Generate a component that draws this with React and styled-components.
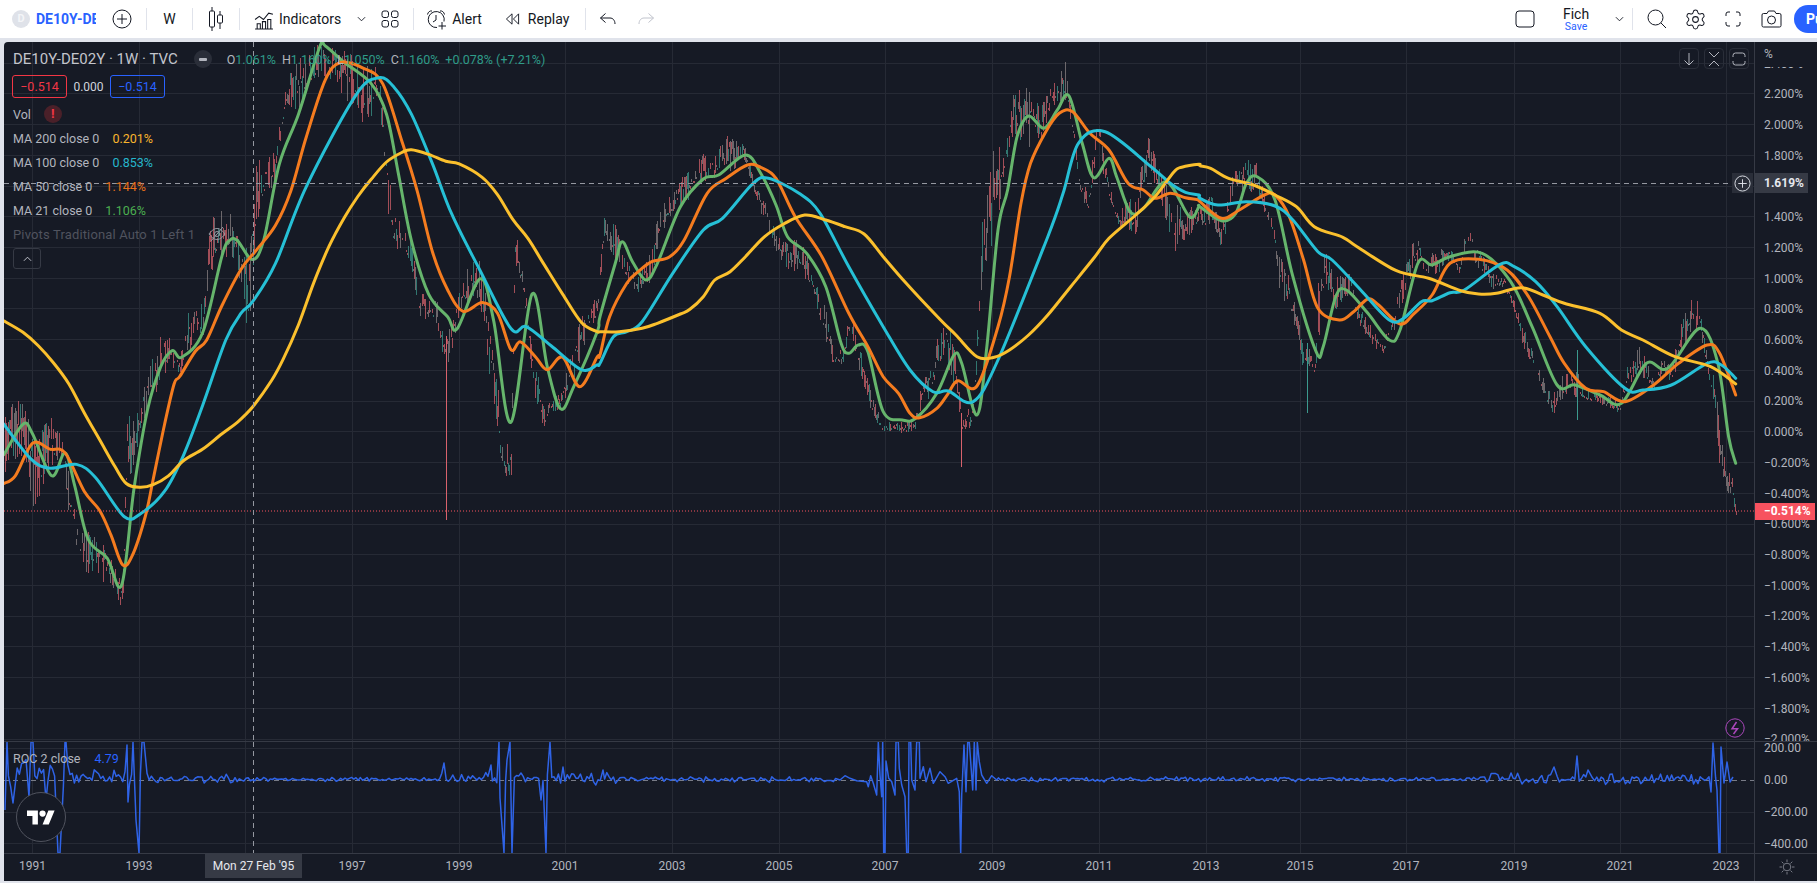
import React from "react";
import styled, { createGlobalStyle } from "styled-components";
import { Settings } from "lucide-react";

const GlobalStyle = createGlobalStyle`
  html, body {
    margin: 0;
    padding: 0;
    width: 1817px;
    height: 883px;
    overflow: hidden;
    background: #e0e3eb;
    font-family: Roboto, "Liberation Sans", sans-serif;
  }
`;

// traced from the screenshot, x/y as read in the three crops, mapped to page px
const z5 = ([x, y]) => [x / 2.613, 30 + y / 2.613];
const z6 = ([x, y]) => [600 + x / 2.613, 30 + y / 3];
const z7 = ([x, y]) => [1200 + x / 2.8, 100 + y / 3];

const trace = (a, b, c) => [...a.map(z5), ...b.map(z6), ...c.map(z7)];

const MA200 = trace(
  [[0,755],[10,760],[60,790],[100,825],[140,870],[180,925],[220,1000],[260,1070],[300,1140],[330,1185],[365,1195],[400,1188],[440,1165],[480,1125],[530,1095],[580,1055],[620,1025],[660,985],[710,915],[740,860],[780,770],[820,660],[860,565],[900,490],[935,435],[970,390],[1010,345],[1050,320],[1075,313],[1120,325],[1165,343],[1200,350],[1260,385],[1300,430],[1340,495],[1380,545],[1420,610],[1470,690],[1520,765],[1560,788]],
  [[0,905],[50,905],[110,895],[150,880],[210,852],[235,838],[270,800],[300,750],[340,725],[380,680],[430,620],[480,582],[535,555],[590,570],[640,590],[690,612],[740,680],[800,760],[890,870],[930,915],[985,980],[1030,982],[1070,960],[1120,915],[1170,855],[1230,770],[1290,685],[1330,625],[1400,555],[1450,500],[1500,425],[1520,412],[1565,403]],
  [[0,197],[30,205],[80,235],[150,255],[210,285],[270,320],[320,380],[400,412],[440,440],[550,512],[640,535],[730,572],[780,582],[830,580],[900,563],[960,585],[1020,610],[1120,640],[1180,690],[1240,720],[1330,770],[1430,800],[1500,852]]
);

const MA100 = trace(
  [[10,1030],[80,1120],[130,1145],[200,1135],[250,1170],[325,1272],[370,1262],[430,1205],[480,1110],[530,980],[590,810],[630,740],[660,710],[720,610],[800,410],[930,170],[990,125],[1030,150],[1075,220],[1130,350],[1180,480],[1250,620],[1335,780],[1375,775],[1440,825],[1520,888],[1560,875]],
  [[0,1000],[35,920],[70,905],[110,875],[190,730],[270,600],[320,565],[400,460],[440,445],[520,490],[575,550],[650,710],[740,890],[810,1020],[870,1085],[910,1083],[975,1115],[1040,990],[1170,620],[1210,490],[1250,340],[1320,305],[1440,410],[1490,460],[1530,487],[1565,495]],
  [[0,295],[50,315],[130,305],[210,318],[260,360],[330,455],[370,480],[450,570],[530,660],[570,655],[620,605],[650,602],[700,578],[740,570],[840,493],[880,500],[940,545],[1000,620],[1080,740],[1190,865],[1240,870],[1320,855],[1420,790],[1460,795],[1500,835]]
);

const MA50 = trace(
  [[10,1185],[40,1165],[85,1080],[130,1095],[170,1105],[220,1205],[260,1255],[290,1320],[320,1397],[345,1375],[380,1270],[400,1175],[430,1030],[455,925],[470,905],[510,840],[540,810],[580,720],[630,625],[670,575],[720,510],[760,420],[800,280],[850,130],[890,85],[950,100],[1000,140],[1050,290],[1090,420],[1130,580],[1170,680],[1210,735],[1260,712],[1300,740],[1335,835],[1360,815],[1400,855],[1430,888],[1470,855],[1515,932],[1560,855]],
  [[0,975],[25,860],[70,760],[100,725],[135,695],[180,682],[220,630],[280,490],[330,445],[385,405],[420,412],[460,445],[510,560],[580,680],[650,850],[700,950],[740,1040],[780,1090],[810,1150],[835,1163],[880,1135],[910,1090],[935,1052],[985,1068],[1040,890],[1070,740],[1100,520],[1125,400],[1165,305],[1200,250],[1235,245],[1280,310],[1330,360],[1380,460],[1420,480],[1450,505],[1490,490],[1530,503],[1565,510]],
  [[0,305],[60,355],[110,330],[180,285],[210,285],[250,350],[290,480],[330,625],[390,660],[430,635],[470,597],[500,615],[560,672],[600,640],[650,585],[700,490],[780,478],[860,510],[920,590],[980,710],[1020,790],[1080,865],[1130,875],[1190,905],[1270,855],[1340,790],[1420,735],[1455,760],[1500,885]]
);

const MA21 = trace(
  [[10,1110],[60,1030],[85,1055],[135,1165],[170,1105],[195,1190],[230,1330],[280,1380],[318,1450],[350,1200],[385,995],[420,880],[450,838],[475,855],[530,790],[580,590],[600,550],[620,550],[660,600],[690,545],[730,350],[780,220],[835,45],[850,42],[900,85],[970,140],[1010,220],[1040,370],[1075,550],[1120,690],[1170,750],[1195,780],[1255,650],[1290,760],[1335,1025],[1390,690],[1430,880],[1465,990],[1500,930],[1560,790]],
  [[0,860],[40,700],[58,635],[85,695],[120,750],[150,700],[210,530],[270,447],[310,435],[380,375],[420,430],[460,525],[490,620],[540,670],[590,770],[630,940],[650,970],[675,945],[700,965],[740,1145],[790,1170],[825,1165],[880,1090],[925,975],[945,1000],[985,1155],[1010,960],[1040,600],[1065,480],[1090,320],[1120,258],[1160,295],[1195,240],[1225,197],[1260,340],[1290,443],[1330,385],[1350,440],[1385,545],[1420,535],[1480,455],[1540,560],[1565,530]],
  [[0,320],[60,362],[100,340],[130,250],[160,230],[210,300],[260,530],[325,755],[345,740],[380,590],[410,570],[470,640],[530,720],[560,690],[610,490],[650,495],[700,470],[790,460],[870,545],[930,680],[1000,855],[1050,855],[1120,885],[1180,910],[1250,790],[1310,805],[1400,685],[1450,790],[1480,1010],[1500,1090]]
);

// [x, top, bottom] of the candle band
const band5 = [[6,1030,1170],[30,960,1130],[60,970,1130],[90,1070,1260],[130,990,1190],[165,1060,1130],[175,1100,1280],[200,1280,1380],[220,1310,1420],[250,1310,1430],[290,1380,1460],[318,1410,1560],[325,1280,1400],[330,990,1210],[360,1000,1100],[380,900,1000],[410,790,950],[440,790,880],[470,850,910],[490,730,850],[530,700,800],[550,470,660],[570,470,600],[615,480,600],[650,530,830],[665,350,600],[690,320,460],[720,320,390],[745,120,220],[790,60,200],[830,35,130],[870,35,130],[900,42,180],[950,80,250],[990,100,200],[1005,250,400],[1025,460,580],[1050,470,600],[1075,550,640],[1095,680,750],[1140,700,770],[1165,800,890],[1190,720,800],[1205,640,730],[1250,580,720],[1260,640,760],[1280,740,920],[1300,920,1050],[1310,1050,1160],[1335,1090,1190],[1345,510,600],[1360,600,680],[1375,700,760],[1395,860,960],[1425,980,1060],[1440,960,1000],[1465,950,990],[1490,850,940],[1530,700,820],[1560,700,760]];
const band6 = [[10,560,640],[40,580,700],[70,690,760],[100,740,790],[130,650,760],[160,520,620],[190,480,560],[225,420,520],[260,365,460],[290,385,450],[330,310,430],[380,340,400],[400,440,480],[425,500,570],[460,610,670],[490,630,720],[530,630,730],[560,740,820],[590,840,960],[610,960,1020],[635,950,1000],[655,830,900],[680,960,1040],[710,1090,1150],[735,1170,1210],[775,1170,1210],[800,1180,1210],[825,1140,1200],[840,1060,1130],[870,990,1090],[900,810,980],[935,1010,1120],[945,1150,1210],[975,1110,1200],[1000,530,780],[1030,300,620],[1055,340,470],[1080,180,330],[1120,150,350],[1150,230,350],[1180,155,230],[1215,95,220],[1240,300,360],[1255,420,500],[1275,500,550],[1300,230,370],[1330,470,510],[1355,540,610],[1400,490,620],[1430,310,420],[1460,410,500],[1500,500,670],[1520,520,640],[1565,530,590]];
const band7 = [[10,320,410],[30,270,370],[60,390,450],[85,240,330],[115,165,270],[160,185,290],[190,330,370],[205,370,395],[218,465,560],[240,490,620],[270,640,690],[285,700,800],[300,730,800],[320,780,840],[330,530,740],[350,450,570],[380,520,630],[420,520,590],[445,620,680],[480,680,730],[510,730,770],[540,650,700],[560,530,640],[590,440,530],[607,390,500],[630,490,520],[660,430,530],[700,445,480],[725,490,530],[745,375,440],[785,450,520],[820,520,570],[850,530,560],[875,590,620],[905,680,750],[940,780,830],[975,870,930],[990,880,945],[1020,810,890],[1055,810,900],[1080,860,910],[1120,880,920],[1175,900,940],[1195,800,860],[1230,735,830],[1270,830,880],[1295,750,820],[1320,790,850],[1350,650,770],[1375,595,700],[1400,605,700],[1425,810,850],[1440,820,950],[1455,980,1110],[1470,1080,1160],[1490,1130,1210],[1500,1210,1245]];

const toBand = (list, map) =>
  list.map(([x, t, b]) => {
    const [px, top] = map([x, t]);
    return [px, top, map([x, b])[1]];
  });
const BAND = [...toBand(band5, z5), ...toBand(band6, z6), ...toBand(band7, z7)];

const random = (seed) => () => {
  seed = (seed + 0x6d2b79f5) | 0;
  let t = Math.imul(seed ^ (seed >>> 15), 1 | seed);
  t = (t + Math.imul(t ^ (t >>> 7), 61 | t)) ^ t;
  return ((t ^ (t >>> 14)) >>> 0) / 4294967296;
};

const buildCandles = () => {
  const rnd = random(27);
  const out = { red: "", teal: "", grey: "" };
  let k = 0;
  for (let x = 5; x <= 1736; x++) {
    while (k < BAND.length - 2 && BAND[k + 1][0] < x) k++;
    if (x < 1720 && rnd() < 0.14) continue;
    const [x0, t0, b0] = BAND[k];
    const [x1, t1, b1] = BAND[k + 1];
    const f = Math.min(1, Math.max(0, (x - x0) / (x1 - x0)));
    const top = t0 + (t1 - t0) * f;
    const bot = b0 + (b1 - b0) * f;
    const h = Math.max(3, bot - top);
    const a = top + rnd() * h * 0.7;
    const b = Math.max(a + 2, bot - rnd() * h * 0.7);
    const r = rnd();
    const key = r < 0.45 ? "red" : r < 0.75 ? "grey" : "teal";
    out[key] += `M${x + 0.5} ${a.toFixed(1)}V${b.toFixed(1)}`;
  }
  return out;
};
const CANDLES = buildCandles();

const buildRoc = () => {
  const rnd = random(95);
  const amp = (x) => {
    if (x < 70) return 22;
    if (x < 150) return 11;
    if (x < 250) return 7;
    if (x < 440) return 3;
    if (x < 620) return 9;
    if (x < 870) return 4;
    if (x < 1480) return 3.5;
    return 8;
  };
  const spikes = [
    [5,810],[7,742],[13,803],[29,797],[31,742],[33,742],[46,800],[58,853],[60,853],[65,742],[66,742],
    [127,745],[128,802],[133,742],[136,820],[139,853],[142,742],[144,742],
    [444,763],[491,765],[499,742],[500,798],[504,853],[507,760],[510,742],[512,853],[541,800],[546,853],[550,742],[563,767],[603,770],
    [1554,767],[1577,756],[1588,770],[1711,792],[1713,743],[1717,790],[1719,853],[1720,853],[1721,747],[1724,783],[1727,762],[1730,782],[1733,777]
  ];
  const middle = [[0,135],[15,122],[30,130],[50,137],[80,140],[85,155],[92,122],[100,145],[110,180],[115,20],[120,120],[125,185],[128,20],[131,355],[135,355],[138,78],[146,130],[155,140],[165,180],[168,20],[175,20],[178,100],[185,150],[195,185],[200,355],[205,355],[207,20],[212,20],[215,135],[225,165],[230,20],[238,20],[240,130],[250,95],[258,140],[270,100],[280,145],[300,110],[315,125],[325,145],[350,130],[358,170],[362,355],[365,180],[372,30],[378,170],[383,22],[388,22],[392,80],[398,165],[403,22],[408,165],[412,22],[418,80],[425,120],[440,145],[455,122],[470,135]]
    .map(([x, y]) => [840 + x / 3, 735 + y / 3]);
  const pts = [...spikes, ...middle];
  for (let x = 4; x < 1733; x += 2.2) {
    if (x > 838 && x < 998) continue;
    if (spikes.some(([s]) => Math.abs(s - x) < 1.3)) continue;
    const up = rnd() * amp(x);
    const down = rnd() * amp(x) * 0.6;
    pts.push([x, 780 - up + down]);
  }
  return pts.sort((a, b) => a[0] - b[0]);
};
const ROC = buildRoc().map(([x, y]) => `${x.toFixed(1)},${y.toFixed(1)}`).join(" ");

const smooth = (pts) => {
  let d = `M${pts[0][0].toFixed(1)} ${pts[0][1].toFixed(1)}`;
  for (let i = 0; i < pts.length - 1; i++) {
    const p0 = pts[Math.max(0, i - 1)];
    const p1 = pts[i];
    const p2 = pts[i + 1];
    const p3 = pts[Math.min(pts.length - 1, i + 2)];
    d += `C${(p1[0] + (p2[0] - p0[0]) / 6).toFixed(1)} ${(p1[1] + (p2[1] - p0[1]) / 6).toFixed(1)} ${(p2[0] - (p3[0] - p1[0]) / 6).toFixed(1)} ${(p2[1] - (p3[1] - p1[1]) / 6).toFixed(1)} ${p2[0].toFixed(1)} ${p2[1].toFixed(1)}`;
  }
  return d;
};

const V_GRID = [32.5, 139, 245, 352, 459, 565, 672, 779, 885, 992, 1099, 1206, 1300, 1406, 1514, 1620, 1726];
const YEARS = ["1991", "1993", "", "1997", "1999", "2001", "2003", "2005", "2007", "2009", "2011", "2013", "2015", "2017", "2019", "2021", "2023"];
const PRICES = ["2.400%", "2.200%", "2.000%", "1.800%", "1.600%", "1.400%", "1.200%", "1.000%", "0.800%", "0.600%", "0.400%", "0.200%", "0.000%", "−0.200%", "−0.400%", "−0.600%", "−0.800%", "−1.000%", "−1.200%", "−1.400%", "−1.600%", "−1.800%", "−2.000%"];
const H_GRID = PRICES.map((_, i) => 63.2 + i * 30.72);
const ROC_LABELS = ["200.00", "0.00", "−200.00", "−400.00"];

const MA_ROWS = [
  { name: "MA 200 close 0", value: "0.201%", color: "#f9b52d" },
  { name: "MA 100 close 0", value: "0.853%", color: "#26b7cc" },
  { name: "MA 50 close 0", value: "1.144%", color: "#e8701a" },
  { name: "MA 21 close 0", value: "1.106%", color: "#4caf50" },
];

const OHLC = [
  ["O", "1.061%"],
  ["H", "1.160%"],
  ["L", "1.050%"],
  ["C", "1.160%"],
];

function App() {
  return (
    <>
      <GlobalStyle />
      <Page>
        <Toolbar>
          <LeftTools>
            <SymbolCell>
              <SymbolDot>D</SymbolDot>
              <SymbolName>DE10Y-DE02Y</SymbolName>
            </SymbolCell>
            <ToolCell $w={34}>
              <Icon viewBox="0 0 20 20" $size={20}>
                <circle cx="10" cy="10" r="9" />
                <path d="M10 5v10M5 10h10" />
              </Icon>
            </ToolCell>
            <Divider $left={7} />
            <ToolCell $w={45}>W</ToolCell>
            <Divider />
            <ToolCell $w={46}>
              <Icon viewBox="0 0 18 28" $size={18} $h={28}>
                <path d="M5 2v24M13 6v18" />
                <rect x="2.5" y="6" width="5" height="16" rx="1" fill="#fff" />
                <rect x="10.5" y="10" width="5" height="8" rx="1" fill="#fff" />
              </Icon>
            </ToolCell>
            <Divider />
            <TextTool $left={14} $gap={5}>
              <Icon viewBox="0 0 19 20" $size={20} $h={21}>
                <path d="M1 10l4-3 4 3 5-6 4 1" />
                <path d="M1 19h17M3 19v-5h3v5M8 19v-7h3v7M13 19v-9h3v9" />
              </Icon>
              Indicators
            </TextTool>
            <ToolCell $w={20} $left={10}>
              <Icon viewBox="0 0 10 6" $size={9} $h={6}>
                <path d="M1 1l4 4 4-4" />
              </Icon>
            </ToolCell>
            <ToolCell $w={26} $left={6}>
              <Icon viewBox="0 0 18 18" $size={18}>
                <rect x="1" y="1" width="6.5" height="6.5" rx="2" />
                <rect x="10.5" y="1" width="6.5" height="6.5" rx="2" />
                <rect x="1" y="10.5" width="6.5" height="6.5" rx="2" />
                <rect x="10.5" y="10.5" width="6.5" height="6.5" rx="2" />
              </Icon>
            </ToolCell>
            <Divider $left={10} />
            <TextTool $left={12} $gap={5}>
              <Icon viewBox="0 0 21 21" $size={21}>
                <path d="M11 18.5a8 8 0 1 1 7-6" />
                <path d="M10 6v5l-3 2" />
                <path d="M1.5 5.5C2 3 4 1.5 6 2M18.5 5.5C18 3 16 1.5 14 2" />
                <path d="M16 13v7.5M12.5 17h7.5" />
              </Icon>
              Alert
            </TextTool>
            <TextTool $left={23} $gap={8}>
              <Icon viewBox="0 0 16 14" $size={15} $h={14}>
                <path d="M7.5 1.5L1.5 7l6 5.5zM14.5 1.5L9 7l5.5 5.5z" />
              </Icon>
              Replay
            </TextTool>
            <Divider $left={16} />
            <ToolCell $w={38} $left={3}>
              <Icon viewBox="0 0 18 14" $size={18} $h={14}>
                <path d="M6.5 1.5L1.5 6l5 4.5M1.5 6H11c3 0 5 2.5 5 6" />
              </Icon>
            </ToolCell>
            <ToolCell $w={38} $muted>
              <Icon viewBox="0 0 18 14" $size={18} $h={14}>
                <path d="M11.5 1.5l5 4.5-5 4.5M16.5 6H7c-3 0-5 2.5-5 6" />
              </Icon>
            </ToolCell>
          </LeftTools>
          <RightTools>
            <ToolCell $w={38}>
              <Icon viewBox="0 0 20 18" $size={20} $h={18}>
                <rect x="1" y="1" width="18" height="16" rx="3" />
              </Icon>
            </ToolCell>
            <SaveCell>
              <span>Fich</span>
              <SaveLabel>Save</SaveLabel>
            </SaveCell>
            <ToolCell $w={26}>
              <Icon viewBox="0 0 10 6" $size={9} $h={6}>
                <path d="M1 1l4 4 4-4" />
              </Icon>
            </ToolCell>
            <Divider />
            <ToolCell $w={38} $left={5}>
              <Icon viewBox="0 0 20 20" $size={20}>
                <circle cx="8.5" cy="8.5" r="7.5" />
                <path d="M14 14l5 5" />
              </Icon>
            </ToolCell>
            <ToolCell $w={38}>
              <Settings size={23} strokeWidth={1.05} />
            </ToolCell>
            <ToolCell $w={38}>
              <Icon viewBox="0 0 16 16" $size={16}>
                <path d="M1 5V3a2 2 0 0 1 2-2h2M11 1h2a2 2 0 0 1 2 2v2M15 11v2a2 2 0 0 1-2 2h-2M5 15H3a2 2 0 0 1-2-2v-2" />
              </Icon>
            </ToolCell>
            <ToolCell $w={38}>
              <Icon viewBox="0 0 21 18" $size={21} $h={18}>
                <path d="M1 5a1.5 1.5 0 0 1 1.5-1.5H6L7.5 1h6L15 3.5h3.5A1.5 1.5 0 0 1 20 5v10.5a1.5 1.5 0 0 1-1.5 1.5h-16A1.5 1.5 0 0 1 1 15.5z" />
                <circle cx="10.5" cy="10" r="4" />
              </Icon>
            </ToolCell>
            <PublishClip>
              <PublishButton>Publish</PublishButton>
            </PublishClip>
          </RightTools>
        </Toolbar>

        <ChartFrame>
          <MainPane>
            <PaneSvg viewBox="4 42 1750 699" width="1750" height="699">
              <g stroke="#262a35" strokeWidth="1" shapeRendering="crispEdges">
                {V_GRID.map((x) => (
                  <line key={x} x1={x} x2={x} y1="42" y2="741" />
                ))}
                {H_GRID.map((y) => (
                  <line key={y} x1="4" x2="1754" y1={y} y2={y} />
                ))}
              </g>
              <g fill="none" strokeWidth="1" shapeRendering="crispEdges">
                <path d={CANDLES.red} stroke="#d8626c" opacity="0.72" />
                <path d={CANDLES.grey} stroke="#8e8587" opacity="0.72" />
                <path d={CANDLES.teal} stroke="#3c9a8e" opacity="0.72" />
                <path d="M446.5 336V520M961.5 413V467" stroke="#d8626c" />
                <path d="M1307.5 343V413M1577.5 350V420" stroke="#3c9a8e" />
              </g>
              <g fill="none" strokeWidth="3" strokeLinecap="round" strokeLinejoin="round">
                <path d={smooth(MA21)} stroke="#66b56c" />
                <path d={smooth(MA50)} stroke="#f57c1f" />
                <path d={smooth(MA100)} stroke="#26c0d6" />
                <path d={smooth(MA200)} stroke="#fbc02d" />
              </g>
              <line x1="4" x2="1754" y1="511" y2="511" stroke="#f7525f" strokeDasharray="1 2" />
              <g stroke="#9598a1" strokeDasharray="5 4">
                <line x1="4" x2="1732" y1="183.5" y2="183.5" />
                <line x1="253.5" x2="253.5" y1="42" y2="741" />
              </g>
            </PaneSvg>

            <Legend>
              <TitleRow>
                <Title>DE10Y-DE02Y · 1W · TVC</Title>
                <MinusDot />
                <Ohlc>
                  {OHLC.map(([k, v]) => (
                    <span key={k}>
                      <OhlcKey>{k}</OhlcKey>
                      {v}
                    </span>
                  ))}
                  <span>+0.078% (+7.21%)</span>
                </Ohlc>
              </TitleRow>
              <BoxRow>
                <ValueBox $color="#f23645">−0.514</ValueBox>
                <BoxGap>0.000</BoxGap>
                <ValueBox $color="#2962ff">−0.514</ValueBox>
              </BoxRow>
              <LegendRow $top={4}>
                <span>Vol</span>
                <AlertDot>!</AlertDot>
              </LegendRow>
              {MA_ROWS.map((row) => (
                <LegendRow key={row.name}>
                  <span>{row.name}</span>
                  <Value $color={row.color}>{row.value}</Value>
                </LegendRow>
              ))}
              <LegendRow $dim>
                <span>Pivots Traditional Auto 1 Left 1</span>
                <Icon viewBox="0 0 18 16" $size={18} $h={16} $stroke="#9598a1">
                  <path d="M1 8c3-4 5.5-5.500 8-5.500S14 4 17 8c-3 4-5.500 5.500-8 5.500S4 12 1 8z" />
                  <circle cx="9" cy="8" r="2.5" />
                  <path d="M3 15L15 1" />
                </Icon>
              </LegendRow>
              <CollapseButton>
                <Icon viewBox="0 0 10 6" $size={9} $h={6} $stroke="#d1d4dc">
                  <path d="M1 5l4-4 4 4" />
                </Icon>
              </CollapseButton>
            </Legend>

            <PaneButtons>
              <PaneButton>
                <Icon viewBox="0 0 14 14" $size={14} $stroke="#b2b5be">
                  <path d="M7 1v12M2.5 8.500L7 13l4.500-4.500" />
                </Icon>
              </PaneButton>
              <PaneButton>
                <Icon viewBox="0 0 14 16" $size={14} $h={16} $stroke="#b2b5be">
                  <path d="M2 1l5 5 5-5M2 15l5-5 5 5" />
                </Icon>
              </PaneButton>
              <PaneButton>
                <Icon viewBox="0 0 14 14" $size={14} $stroke="#b2b5be">
                  <path d="M1 5V3.500A2.500 2.500 0 0 1 3.500 1h7A2.500 2.500 0 0 1 13 3.500V5M1 9v1.500A2.500 2.500 0 0 0 3.500 13h7a2.500 2.500 0 0 0 2.500-2.500V9" />
                </Icon>
              </PaneButton>
            </PaneButtons>

            <CrossPlus>
              <Icon viewBox="0 0 18 18" $size={17} $stroke="#e0e3eb">
                <circle cx="9" cy="9" r="8" />
                <path d="M9 4.500v9M4.500 9h9" />
              </Icon>
            </CrossPlus>

            <BoltBadge>
              <Icon viewBox="0 0 20 20" $size={20} $stroke="#ab47bc">
                <circle cx="10" cy="10" r="9.2" />
                <path d="M11.5 4L7 10.800h5.500L8.500 16" strokeWidth="1.5" />
              </Icon>
            </BoltBadge>
          </MainPane>

          <PriceAxis>
            <PriceList>
              {PRICES.map((p) => (
                <PriceLabel key={p}>{p}</PriceLabel>
              ))}
            </PriceList>
            <UnitHead>%</UnitHead>
            <CrossTag>1.619%</CrossTag>
            <LastTag>−0.514%</LastTag>
          </PriceAxis>

          <RocPane>
            <PaneSvg viewBox="4 742 1750 111" width="1750" height="111">
              <g stroke="#262a35" strokeWidth="1" shapeRendering="crispEdges">
                {V_GRID.map((x) => (
                  <line key={x} x1={x} x2={x} y1="742" y2="853" />
                ))}
                {[748, 812, 843].map((y) => (
                  <line key={y} x1="4" x2="1754" y1={y} y2={y} />
                ))}
              </g>
              <line x1="4" x2="1754" y1="780.5" y2="780.5" stroke="#787b86" strokeDasharray="5 4" />
              <line x1="253.5" x2="253.5" y1="742" y2="853" stroke="#9598a1" strokeDasharray="5 4" />
              <polyline points={ROC} fill="none" stroke="#2f63e6" strokeWidth="1.5" strokeLinejoin="round" />
            </PaneSvg>
            <RocLegend>
              <span>ROC 2 close</span>
              <Value $color="#2962ff">4.79</Value>
            </RocLegend>
            <LogoBadge>
              <svg viewBox="0 4 36 18" width="28" height="15" fill="#fff">
                <path d="M14 22H7V11H0V4h14v18ZM28 22h-8l7.500-18h8L28 22Z" />
                <circle cx="20" cy="8" r="4" />
              </svg>
            </LogoBadge>
          </RocPane>

          <RocAxis>
            {ROC_LABELS.map((l) => (
              <RocLabel key={l}>{l}</RocLabel>
            ))}
          </RocAxis>

          <TimeAxis>
            {YEARS.map((year, i) => (
              <Tick key={V_GRID[i]} $gap={i === 0 ? V_GRID[0] - 4 : V_GRID[i] - V_GRID[i - 1]}>
                {year}
              </Tick>
            ))}
            <TimeTag>Mon 27 Feb '95</TimeTag>
          </TimeAxis>

          <TimeCorner>
            <Icon viewBox="0 0 16 16" $size={16} $stroke="#787b86">
              <circle cx="8" cy="8" r="3.8" />
              <path d="M8 .5v2.500M8 13v2.500M.5 8H3M13 8h2.500M2.700 2.700l1.800 1.800M11.500 11.500l1.800 1.800M13.300 2.700l-1.800 1.800M4.500 11.500l-1.800 1.800" />
            </Icon>
          </TimeCorner>
        </ChartFrame>
      </Page>
    </>
  );
}

const Page = styled.div`
  width: 1817px;
  height: 883px;
  display: flex;
  flex-direction: column;
  overflow: hidden;
`;

const Toolbar = styled.div`
  flex: none;
  height: 38px;
  margin-bottom: 4px;
  display: flex;
  justify-content: space-between;
  background: #fff;
  color: #131722;
  font-size: 14px;
`;

const LeftTools = styled.div`
  display: flex;
  align-items: center;
`;

const RightTools = styled.div`
  display: flex;
  align-items: center;
`;

const SymbolCell = styled.div`
  width: 105px;
  padding-left: 12px;
  box-sizing: border-box;
  display: flex;
  align-items: center;
  gap: 6px;
`;

const SymbolDot = styled.div`
  flex: none;
  width: 18px;
  height: 18px;
  border-radius: 50%;
  background: #dfe2e9;
  color: #f4f5f8;
  font-size: 11px;
  font-weight: 700;
  line-height: 18px;
  text-align: center;
`;

const SymbolName = styled.div`
  width: 60px;
  overflow: hidden;
  white-space: nowrap;
  color: #2962ff;
  font-weight: 700;
  font-size: 14px;
`;

const ToolCell = styled.div`
  flex: none;
  width: ${(p) => p.$w}px;
  margin-left: ${(p) => p.$left || 0}px;
  height: 38px;
  display: flex;
  align-items: center;
  justify-content: center;
  color: ${(p) => (p.$muted ? "#c1c4cd" : "#131722")};
`;

const TextTool = styled.div`
  flex: none;
  margin-left: ${(p) => p.$left}px;
  display: flex;
  align-items: center;
  gap: ${(p) => p.$gap}px;
  white-space: nowrap;
  color: #131722;
`;

const Divider = styled.div`
  flex: none;
  width: 1px;
  height: 22px;
  margin-left: ${(p) => p.$left || 0}px;
  background: #e0e3eb;
`;

const Icon = styled.svg`
  flex: none;
  width: ${(p) => p.$size}px;
  height: ${(p) => p.$h || p.$size}px;
  fill: none;
  stroke: ${(p) => p.$stroke || "currentColor"};
  stroke-width: 1;
`;

const SaveCell = styled.div`
  flex: none;
  width: 60px;
  margin-left: 2px;
  padding-top: 2px;
  display: flex;
  flex-direction: column;
  align-items: center;
  font-size: 14px;
  line-height: 14px;
`;

const SaveLabel = styled.span`
  color: #2962ff;
  font-size: 10.5px;
  line-height: 12px;
`;

const PublishClip = styled.div`
  flex: none;
  width: 23px;
  height: 28px;
  margin-left: 4px;
  overflow: hidden;
`;

const PublishButton = styled.div`
  width: 80px;
  height: 28px;
  border-radius: 14px;
  background: #2962ff;
  color: #fff;
  font-weight: 700;
  font-size: 14px;
  line-height: 28px;
  padding-left: 12px;
  box-sizing: border-box;
`;

const ChartFrame = styled.div`
  flex: none;
  width: 1813px;
  height: 839px;
  margin-left: 4px;
  display: grid;
  grid-template-columns: 1750px 63px;
  grid-template-rows: 699px 112px 28px;
  background: #161a25;
  border-top-left-radius: 4px;
  overflow: hidden;
  color: #b2b5be;
  font-size: 12.5px;
`;

const MainPane = styled.div`
  position: relative;
  overflow: hidden;
`;

const PaneSvg = styled.svg`
  display: block;
`;

const Legend = styled.div`
  position: absolute;
  left: 9px;
  top: 6px;
  display: flex;
  flex-direction: column;
  align-items: flex-start;
`;

const TitleRow = styled.div`
  height: 22px;
  display: flex;
  align-items: center;
`;

const Title = styled.div`
  font-size: 15px;
  color: #c3c5cc;
  white-space: nowrap;
`;

const MinusDot = styled.div`
  flex: none;
  position: relative;
  width: 18px;
  height: 18px;
  margin-left: 16px;
  border-radius: 50%;
  background: #2a2e39;

  &::after {
    content: "";
    position: absolute;
    left: 5px;
    top: 7.5px;
    width: 8px;
    height: 3px;
    border-radius: 1px;
    background: #b2b5be;
  }
`;

const Ohlc = styled.div`
  margin-left: 15px;
  display: flex;
  gap: 6px;
  font-size: 12.5px;
  color: #2f9c89;
  white-space: nowrap;
`;

const OhlcKey = styled.span`
  color: #b2b5be;
`;

const BoxRow = styled.div`
  height: 23px;
  margin-top: 5px;
  display: flex;
  align-items: center;
  margin-left: -1px;
`;

const ValueBox = styled.div`
  width: 55px;
  height: 23px;
  box-sizing: border-box;
  border: 1px solid ${(p) => p.$color};
  border-radius: 3px;
  color: ${(p) => p.$color};
  font-size: 12.5px;
  line-height: 21px;
  text-align: center;
`;

const BoxGap = styled.div`
  width: 43px;
  color: #d1d4dc;
  font-size: 12px;
  text-align: center;
`;

const LegendRow = styled.div`
  height: 24px;
  margin-top: ${(p) => p.$top || 0}px;
  display: flex;
  align-items: center;
  gap: 13px;
  color: ${(p) => (p.$dim ? "#50535e" : "#b2b5be")};
  font-size: ${(p) => (p.$dim ? "13px" : "12.5px")};
  letter-spacing: ${(p) => (p.$dim ? "0.15px" : "0")};
  white-space: nowrap;
`;

const Value = styled.span`
  color: ${(p) => p.$color};
`;

const AlertDot = styled.div`
  width: 18px;
  height: 18px;
  border-radius: 50%;
  background: #4a2029;
  color: #f23645;
  font-size: 13px;
  font-weight: 700;
  line-height: 18px;
  text-align: center;
`;

const CollapseButton = styled.div`
  width: 28px;
  height: 21px;
  margin-top: 2px;
  box-sizing: border-box;
  border: 1px solid #363a45;
  border-radius: 3px;
  display: flex;
  align-items: center;
  justify-content: center;
`;

const PaneButtons = styled.div`
  position: absolute;
  top: 6px;
  right: 5px;
  display: flex;
  gap: 5px;
`;

const PaneButton = styled.div`
  width: 20px;
  height: 21px;
  box-sizing: border-box;
  border: 1px solid #2a2e39;
  border-radius: 4px;
  display: flex;
  align-items: center;
  justify-content: center;
`;

const CrossPlus = styled.div`
  position: absolute;
  right: 1px;
  top: 131px;
  width: 21px;
  height: 20px;
  background: #2a2e39;
  display: flex;
  align-items: center;
  justify-content: center;
`;

const BoltBadge = styled.div`
  position: absolute;
  right: 9px;
  bottom: 3px;
  width: 20px;
  height: 20px;
`;

const PriceAxis = styled.div`
  position: relative;
  border-left: 1px solid #363a45;
  overflow: hidden;
`;

const PriceList = styled.div`
  padding-top: 6.5px;
  display: flex;
  flex-direction: column;
`;

const PriceLabel = styled.div`
  flex: none;
  height: 30.72px;
  line-height: 30.72px;
  padding-left: 9px;
  font-size: 12px;
  white-space: nowrap;
`;

const UnitHead = styled.div`
  position: absolute;
  left: 0;
  right: 0;
  top: 0;
  height: 25px;
  padding-left: 9px;
  background: #161a25;
  font-size: 12px;
  line-height: 24px;
`;

const CrossTag = styled.div`
  position: absolute;
  left: 0;
  top: 131px;
  width: 53px;
  height: 20px;
  padding-left: 9px;
  box-sizing: border-box;
  background: #363a45;
  color: #e6e8ee;
  font-size: 12px;
  font-weight: 700;
  line-height: 20px;
`;

const LastTag = styled.div`
  position: absolute;
  left: 0;
  top: 461px;
  width: 60px;
  height: 17px;
  padding-left: 9px;
  box-sizing: border-box;
  background: #f7525f;
  color: #fff;
  font-size: 12px;
  font-weight: 700;
  line-height: 17px;
`;

const RocPane = styled.div`
  position: relative;
  border-top: 1px solid #363a45;
`;

const RocLegend = styled.div`
  position: absolute;
  left: 9px;
  top: 9px;
  display: flex;
  gap: 14px;
  white-space: nowrap;
`;

const LogoBadge = styled.div`
  position: absolute;
  left: 12px;
  top: 50px;
  width: 50px;
  height: 50px;
  box-sizing: border-box;
  border: 1px solid #50535e;
  border-radius: 50%;
  background: #161a25;
  display: flex;
  align-items: center;
  justify-content: center;
`;

const RocAxis = styled.div`
  border-top: 1px solid #363a45;
  border-left: 1px solid #363a45;
  display: flex;
  flex-direction: column;
`;

const RocLabel = styled.div`
  flex: none;
  height: 32px;
  line-height: 32px;
  padding-left: 9px;
  font-size: 12px;
  white-space: nowrap;

  &:first-child {
    margin-top: -10px;
  }
`;

const TimeAxis = styled.div`
  position: relative;
  border-top: 1px solid #363a45;
  display: flex;
  align-items: center;
  height: 28px;
  box-sizing: border-box;
`;

const Tick = styled.div`
  flex: none;
  width: 0;
  margin-left: ${(p) => p.$gap}px;
  display: flex;
  justify-content: center;
  white-space: nowrap;
  font-size: 12px;
  margin-bottom: 4px;
`;

const TimeTag = styled.div`
  position: absolute;
  left: 201px;
  top: 0;
  width: 97px;
  height: 24px;
  background: #363a45;
  color: #e6e8ee;
  font-size: 12px;
  line-height: 24px;
  text-align: center;
  white-space: nowrap;
`;

const TimeCorner = styled.div`
  border-top: 1px solid #363a45;
  border-left: 1px solid #363a45;
  padding: 5px 0 0 24px;
`;

export default App;
